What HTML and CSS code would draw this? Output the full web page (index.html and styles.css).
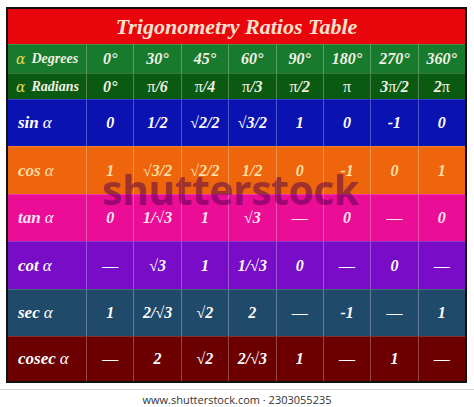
FILE: index.html
```html
<!DOCTYPE html>
<html>
<head>
<meta charset="utf-8">
<link rel="stylesheet" href="styles.css">
</head>
<body>
<div class="page">
  <div class="frame">
    <div class="grid">
      <div class="title">Trigonometry Ratios Table</div>

      <div class="cell lab deg"><span class="a">α</span> Degrees</div>
      <div class="cell deg">0°</div><div class="cell deg">30°</div><div class="cell deg">45°</div><div class="cell deg">60°</div><div class="cell deg">90°</div><div class="cell deg">180°</div><div class="cell deg">270°</div><div class="cell deg">360°</div>

      <div class="cell lab rad"><span class="a">α</span> Radians</div>
      <div class="cell rad">0°</div><div class="cell rad"><span class="u">π</span>/6</div><div class="cell rad"><span class="u">π</span>/4</div><div class="cell rad"><span class="u">π</span>/3</div><div class="cell rad"><span class="u">π</span>/2</div><div class="cell rad"><span class="u">π</span></div><div class="cell rad">3<span class="u">π</span>/2</div><div class="cell rad">2<span class="u">π</span></div>

      <div class="cell fn sin">sin <span class="g">α</span></div>
      <div class="cell v sin">0</div><div class="cell v sin">1/2</div><div class="cell v sin"><span class="u">√</span>2/2</div><div class="cell v sin"><span class="u">√</span>3/2</div><div class="cell v sin">1</div><div class="cell v sin">0</div><div class="cell v sin">-1</div><div class="cell v sin">0</div>

      <div class="cell fn cos">cos <span class="g">α</span></div>
      <div class="cell v cos">1</div><div class="cell v cos"><span class="u">√</span>3/2</div><div class="cell v cos"><span class="u">√</span>2/2</div><div class="cell v cos">1/2</div><div class="cell v cos">0</div><div class="cell v cos">-1</div><div class="cell v cos">0</div><div class="cell v cos">1</div>

      <div class="cell fn tan">tan<span class="g">α</span></div>
      <div class="cell v tan">0</div><div class="cell v tan">1/<span class="u">√</span>3</div><div class="cell v tan">1</div><div class="cell v tan"><span class="u">√</span>3</div><div class="cell v tan dash">—</div><div class="cell v tan">0</div><div class="cell v tan dash">—</div><div class="cell v tan">0</div>

      <div class="cell fn cot">cot <span class="g">α</span></div>
      <div class="cell v cot dash">—</div><div class="cell v cot"><span class="u">√</span>3</div><div class="cell v cot">1</div><div class="cell v cot">1/<span class="u">√</span>3</div><div class="cell v cot">0</div><div class="cell v cot dash">—</div><div class="cell v cot">0</div><div class="cell v cot dash">—</div>

      <div class="cell fn sec">sec <span class="g">α</span></div>
      <div class="cell v sec">1</div><div class="cell v sec">2/<span class="u">√</span>3</div><div class="cell v sec"><span class="u">√</span>2</div><div class="cell v sec">2</div><div class="cell v sec dash">—</div><div class="cell v sec">-1</div><div class="cell v sec dash">—</div><div class="cell v sec">1</div>

      <div class="cell fn csc">cosec <span class="g">α</span></div>
      <div class="cell v csc dash">—</div><div class="cell v csc">2</div><div class="cell v csc"><span class="u">√</span>2</div><div class="cell v csc">2/<span class="u">√</span>3</div><div class="cell v csc">1</div><div class="cell v csc dash">—</div><div class="cell v csc">1</div><div class="cell v csc dash">—</div>
    </div>
    <div class="watermark">shutterstock</div>
  </div>
  <div class="footer">www.shutterstock.com · 2303055235</div>
</div>
</body>
</html>
```
FILE: styles.css
```css
html, body {
  margin: 0;
  padding: 0;
  background: #ffffff;
}
.page {
  width: 474px;
  height: 407px;
  display: flex;
  flex-direction: column;
}
.frame {
  position: relative;
  margin: 7px 0 0 6px;
  width: 457px;
  border: 2px solid #111111;
}
.grid {
  display: grid;
  grid-template-columns: 78px repeat(8, 1fr);
  grid-template-rows: 35px 29px 26px 47px 48px 47px 48px 47px 45px;
  font-family: "Liberation Serif", "DejaVu Serif", serif;
  font-weight: bold;
  font-style: italic;
}
.title {
  grid-column: 1 / -1;
  background: #e8050b;
  color: #fbe2cf;
  font-size: 22px;
  display: flex;
  align-items: center;
  justify-content: center;
  padding-top: 1px;
}
.cell {
  display: flex;
  align-items: center;
  justify-content: center;
  border-left: 1px solid rgba(255, 255, 255, 0.28);
  border-top: 1px solid rgba(255, 255, 255, 0.18);
  color: #ffffff;
  white-space: nowrap;
}
.lab, .fn {
  border-left: none;
  justify-content: flex-start;
}
.deg {
  background: #187a2c;
  font-size: 16px;
  color: #f2f2e4;
}
.rad {
  background: #0b5a12;
  font-size: 16px;
  color: #f2f2e4;
}
.lab {
  font-size: 14px;
  padding-left: 8px;
}
.lab .a {
  color: #e3dc5c;
  font-style: italic;
  font-weight: normal;
  font-family: "DejaVu Serif", serif;
  font-size: 14px;
  margin-right: 6px;
}
.u {
  font-style: normal;
  font-weight: normal;
}
.fn {
  font-size: 17px;
  padding-left: 10px;
}
.fn .g {
  font-weight: normal;
  margin-left: 4px;
}
.v {
  font-size: 16px;
}
.dash {
  font-weight: normal;
  font-style: normal;
}
.sin { background: #0b12b2; }
.cos { background: #ef650c; color: #ffdfa6; }
.tan { background: #eb0d96; color: #ffe6f4; }
.cot { background: #790cc6; }
.sec { background: #1f4a69; }
.csc { background: #6c0000; }
.watermark {
  position: absolute;
  left: 94px;
  top: 156px;
  font-family: "Open Sans", "Liberation Sans", sans-serif;
  font-weight: bold;
  font-size: 41px;
  line-height: 48px;
  letter-spacing: -0.5px;
  color: rgba(80, 0, 80, 0.5);
  pointer-events: none;
}
.footer {
  margin-top: 6px;
  border-top: 1px solid #d6d6d6;
  padding-top: 3px;
  text-align: center;
  font-family: "Open Sans", "Liberation Sans", sans-serif;
  font-size: 11px;
  line-height: 13px;
  color: #333333;
}
```
